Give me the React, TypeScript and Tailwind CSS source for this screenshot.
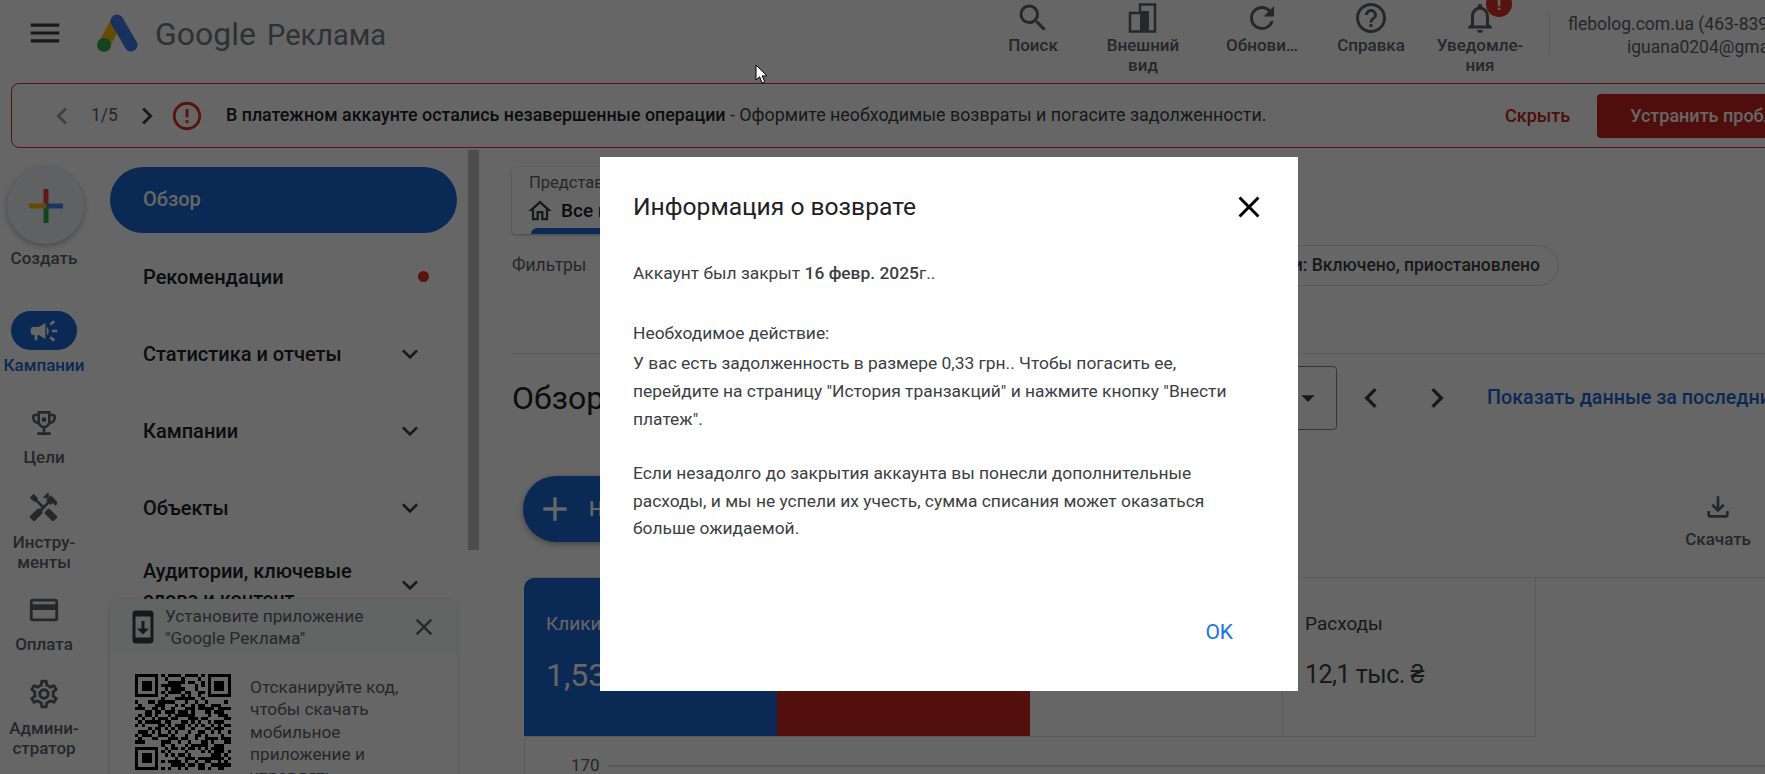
import { ReactNode } from "react";
import {
  MdSearch,
  MdRefresh,
  MdHelpOutline,
  MdNotificationsNone,
  MdCampaign,
  MdHandyman,
  MdOutlineCreditCard,
  MdOutlineSettings,
  MdExpandMore,
  MdClose,
  MdChevronLeft,
  MdChevronRight,
  MdOutlineHome,
  MdAdd,
  MdOutlineFileDownload,
  MdOutlineSystemUpdate,
  MdErrorOutline,
  MdArrowDropDown,
  MdMenu,
} from "react-icons/md";

function TopAction({ icon, label, width }: { icon: ReactNode; label: ReactNode; width: string }) {
  return (
    <div className={`flex flex-col items-center ${width}`}>
      <div className="h-[35px] flex items-center justify-center">{icon}</div>
      <div className="text-[17px] leading-[20px] font-medium text-[#5f6368] text-center">{label}</div>
    </div>
  );
}

function Logo() {
  return (
    <svg width="41" height="38" viewBox="0 0 41 38">
      <line x1="7" y1="31" x2="20" y2="7" stroke="#fbbc04" strokeWidth="12" strokeLinecap="round" />
      <line x1="20" y1="7" x2="34" y2="31" stroke="#3f7ee8" strokeWidth="13" strokeLinecap="round" />
      <circle cx="7" cy="31" r="7" fill="#34a853" />
    </svg>
  );
}

function Plus() {
  return (
    <svg width="34" height="34" viewBox="0 0 34 34">
      <rect x="14.5" y="0" width="5" height="17" fill="#ea4335" />
      <rect x="17" y="14.5" width="17" height="5" fill="#4285f4" />
      <rect x="14.5" y="17" width="5" height="17" fill="#34a853" />
      <rect x="0" y="14.5" width="17" height="5" fill="#fbbc04" />
    </svg>
  );
}

function Trophy() {
  return (
    <svg width="32" height="32" viewBox="0 0 24 24" fill="#5f6368">
      <path d="M19 5h-2V3H7v2H5c-1.1 0-2 .9-2 2v1c0 2.55 1.92 4.63 4.39 4.94.63 1.5 1.98 2.63 3.61 2.96V19H7v2h10v-2h-4v-3.1c1.63-.33 2.98-1.46 3.61-2.96C19.08 12.63 21 10.55 21 8V7c0-1.1-.9-2-2-2zM5 8V7h2v3.82C5.84 10.4 5 9.3 5 8zm7 6c-1.65 0-3-1.35-3-3V5h6v6c0 1.65-1.35 3-3 3zm7-6c0 1.3-.84 2.4-2 2.82V7h2v1z" />
      <circle cx="12" cy="9.5" r="1.8" />
    </svg>
  );
}

function AppearanceIcon() {
  return (
    <svg width="32" height="32" viewBox="0 0 32 32" fill="none">
      <path d="M13 2.5h15v27H3V11h10z" stroke="#5f6368" strokeWidth="2.5" />
      <rect x="13" y="9" width="9" height="20" fill="#5f6368" />
    </svg>
  );
}

function Qr() {
  const n = 29;
  const cells: ReactNode[] = [];
  const finder = (x: number, y: number) =>
    x >= 0 && x < 7 && y >= 0 && y < 7 && (x === 0 || x === 6 || y === 0 || y === 6 || (x >= 2 && x <= 4 && y >= 2 && y <= 4));
  for (let y = 0; y < n; y++) {
    for (let x = 0; x < n; x++) {
      let on: boolean;
      if (x < 8 && y < 8) on = finder(x, y);
      else if (x >= n - 8 && y < 8) on = finder(x - (n - 7), y);
      else if (x < 8 && y >= n - 8) on = finder(x, y - (n - 7));
      else on = ((x * 7 + y * 13 + x * y * 5 + ((x * x) ^ (y * 3))) % 5) % 3 === 0 || (x ^ y) % 7 === 1;
      if (on) cells.push(<rect key={`${x}-${y}`} x={x} y={y} width="1" height="1" fill="#000" />);
    }
  }
  return (
    <svg width="96" height="96" viewBox="0 0 29 29" shapeRendering="crispEdges" className="shrink-0">
      {cells}
    </svg>
  );
}

function RailItem({ icon, label, className }: { icon: ReactNode; label: ReactNode; className: string }) {
  return (
    <div className={`flex flex-col items-center ${className}`}>
      <div className="h-[39px] flex items-center justify-center">{icon}</div>
      <div className="mt-[5px] text-[17px] leading-[20px] font-medium text-[#5f6368] text-center whitespace-nowrap">{label}</div>
    </div>
  );
}

function NavRow({ label, dot }: { label: ReactNode; dot?: boolean }) {
  return (
    <div className="h-[77px] flex items-center justify-between pl-[33px] pr-[22px] text-[20px] leading-[28px] font-medium text-[#202124]">
      <div>{label}</div>
      {dot ? (
        <div className="w-[11px] h-[11px] rounded-full bg-[#d93025] mr-[6px]" />
      ) : (
        <MdExpandMore size={32} className="text-[#3c4043] mr-[9px]" />
      )}
    </div>
  );
}

function Tile({ label, value, className, valueClass }: { label: string; value: string; className: string; valueClass: string }) {
  return (
    <div className={`pl-[22px] pt-[34px] shrink-0 ${className}`}>
      <div className="text-[19px] leading-[24px]">{label}</div>
      <div className={`mt-[17px] leading-[44px] whitespace-nowrap ${valueClass}`}>{value}</div>
    </div>
  );
}

export default function App() {
  return (
    <div className="relative w-[1765px] h-[774px] overflow-hidden bg-white [font-family:Roboto,sans-serif] text-[#3c4043]">
      {/* top bar */}
      <header className="h-[83px] flex items-start">
        <MdMenu size={38} className="ml-[26px] mt-[14px] text-[#3c4043]" />
        <div className="ml-[33px] mt-[14px]">
          <Logo />
        </div>
        <div className="ml-[17px] mt-[12px] flex items-baseline text-[#757a80]">
          <span className="text-[32px] leading-[44px]">Google</span>
          <span className="ml-[11px] text-[29px] leading-[44px]">Реклама</span>
        </div>
        <div className="ml-auto flex items-start">
          <TopAction width="w-[110px]" icon={<MdSearch size={36} className="text-[#5f6368]" />} label="Поиск" />
          <TopAction width="w-[110px]" icon={<AppearanceIcon />} label={<>Внешний<br />вид</>} />
          <TopAction width="w-[128px]" icon={<MdRefresh size={36} className="text-[#5f6368]" />} label="Обнови…" />
          <TopAction width="w-[90px]" icon={<MdHelpOutline size={36} className="text-[#5f6368]" />} label="Справка" />
          <div className="relative w-[128px]">
            <TopAction width="w-full" icon={<MdNotificationsNone size={36} className="text-[#5f6368]" />} label={<>Уведомле-<br />ния</>} />
            <div className="absolute left-[70px] -top-[9px] w-[26px] h-[26px] rounded-full bg-[#d93025] text-white text-[17px] leading-[26px] font-bold text-center">!</div>
          </div>
        </div>
        <div className="ml-[5px] mt-[13px] w-px h-[42px] bg-[#dadce0]" />
        <div className="w-[215px] overflow-hidden whitespace-nowrap text-[17.5px] leading-[23px] text-[#5f6368] pt-[13px]">
          <div className="pl-[18px]">flebolog.com.ua (463-839-2204)</div>
          <div className="pl-[77px]">iguana0204@gmail.com</div>
        </div>
      </header>

      {/* alert */}
      <div className="ml-[11px] w-[1900px] h-[65px] flex items-center border border-[#d93025] rounded-[8px] text-[17.85px]">
        <MdChevronLeft size={34} className="ml-[33px] text-[#9aa0a6] shrink-0" />
        <span className="ml-[12px] w-[27px] text-[17.5px] text-[#5f6368] shrink-0">1/5</span>
        <MdChevronRight size={34} className="ml-[12px] text-[#3c4043] shrink-0" />
        <MdErrorOutline size={34} className="ml-[6px] text-[#d93025] shrink-0" />
        <p className="ml-[22px] w-[1279px] shrink-0 whitespace-nowrap text-[#3c4043]">
          <span className="font-medium text-[#202124]">В платежном аккаунте остались незавершенные операции</span> - Оформите необходимые возвраты и погасите задолженности.
        </p>
        <span className="font-medium text-[#c5221f] text-[18px] shrink-0">Скрыть</span>
        <div className="ml-[27px] h-[44px] w-[260px] pl-[33px] shrink-0 flex items-center rounded-[4px] bg-[#c5221f] text-white font-medium text-[18px] whitespace-nowrap">Устранить проблему</div>
      </div>

      <div className="flex h-[626px]">
        {/* icon rail */}
        <aside className="w-[88px] shrink-0 flex flex-col items-center">
          <div className="mt-[19px] ml-[3px] w-[77px] h-[77px] rounded-full bg-[#f1f3f4] shadow-[0_2px_6px_rgba(0,0,0,0.3)] flex items-center justify-center">
            <Plus />
          </div>
          <div className="mt-[4px] text-[17px] leading-[20px] font-medium text-[#5f6368]">Создать</div>
          <RailItem
            className="mt-[43px]"
            icon={
              <div className="w-[66px] h-[39px] rounded-full bg-[#1a67d2] flex items-center justify-center">
                <MdCampaign size={32} className="text-white" />
              </div>
            }
            label={<span className="text-[#1a67d2]">Кампании</span>}
          />
          <RailItem className="mt-[28px]" icon={<Trophy />} label="Цели" />
          <RailItem className="mt-[21px]" icon={<MdHandyman size={33} className="text-[#5f6368]" />} label={<>Инстру-<br />менты</>} />
          <RailItem className="mt-[18px]" icon={<MdOutlineCreditCard size={34} className="text-[#5f6368]" />} label="Оплата" />
          <RailItem className="mt-[20px]" icon={<MdOutlineSettings size={34} className="text-[#5f6368]" />} label={<>Админи-<br />стратор</>} />
        </aside>

        {/* section nav */}
        <nav className="relative ml-[22px] w-[347px] shrink-0 pt-[19px]">
          <div className="h-[66px] mb-[5px] rounded-full bg-[#1a67d2] text-white text-[20px] font-medium flex items-center pl-[33px] pb-[2px]">Обзор</div>
          <NavRow label="Рекомендации" dot />
          <NavRow label="Статистика и отчеты" />
          <NavRow label="Кампании" />
          <NavRow label="Объекты" />
          <NavRow label={<>Аудитории, ключевые<br />слова и контент</>} />

          <div className="absolute left-0 right-0 top-[451px] h-[200px] bg-white rounded-t-[10px] shadow-[0_1px_4px_rgba(0,0,0,0.2)]">
            <div className="h-[55px] bg-[#f8f9fa] rounded-t-[10px] flex items-center pl-[18px] pr-[19px] text-[17.3px] leading-[22px] text-[#5f6368]">
              <MdOutlineSystemUpdate size={36} className="-ml-[3px] text-[#3c4043] shrink-0" />
              <div className="ml-[4px] flex-1">Установите приложение<br />"Google Реклама"</div>
              <MdClose size={28} className="text-[#5f6368] shrink-0" />
            </div>
            <div className="flex pl-[25px] pt-[20px]">
              <Qr />
              <div className="ml-[19px] mt-[2px] text-[17.3px] leading-[22.3px] text-[#5f6368]">
                Отсканируйте код,<br />чтобы скачать<br />мобильное<br />приложение и<br />управлять
              </div>
            </div>
          </div>
        </nav>

        {/* scrollbar */}
        <div className="ml-[11px] mt-[2px] w-[11px] h-[400px] bg-[#c1c1c1] shrink-0" />

        {/* main */}
        <main className="ml-[33px] w-[1253px] shrink-0 pt-[19px]">
          <div className="relative w-[300px] h-[67px] rounded-[4px] bg-white shadow-[0_1px_3px_rgba(0,0,0,0.3)] overflow-hidden pl-[17px] pt-[6px]">
            <div className="text-[16.5px] leading-[20px] text-[#5f6368]">Представление</div>
            <div className="flex items-center mt-[4px] -ml-[3px] text-[19px] leading-[28px] font-medium text-[#202124]">
              <MdOutlineHome size={28} className="text-[#3c4043]" />
              <span className="ml-[7px]">Все кампании</span>
            </div>
            <div className="absolute left-[19px] right-[20px] bottom-0 h-[6px] rounded-t-[6px] bg-[#1a67d2]" />
          </div>

          <div className="mt-[11px] h-[41px] flex items-center w-[1047px] text-[17.5px]">
            <span className="text-[#5f6368]">Фильтры</span>
            <div className="ml-auto h-[41px] px-[18px] rounded-full border border-[#dadce0] flex items-center font-medium text-[#3c4043]">
              Статус кампании: Включено, приостановлено
            </div>
          </div>

          <div className="mt-[67px] border-t border-[#e0e0e0]" />

          <div className="mt-[12px] h-[64px] flex items-center">
            <h1 className="w-[188px] shrink-0 text-[32px] font-normal text-[#202124]">Обзор</h1>
            <div className="w-[637px] h-[64px] shrink-0 border border-[#80868b] rounded-[4px] flex items-center justify-end pr-[12px]">
              <MdArrowDropDown size={32} className="text-[#3c4043]" />
            </div>
            <MdChevronLeft size={40} className="ml-[14px] text-[#3c4043] shrink-0" />
            <MdChevronRight size={40} className="ml-[26px] text-[#3c4043] shrink-0" />
            <span className="ml-[30px] whitespace-nowrap text-[19.7px] font-medium text-[#1a67d2]">Показать данные за последние 7 дней</span>
          </div>

          <div className="mt-[46px] h-[66px] flex items-start justify-between pr-[14px]">
            <div className="ml-[11px] w-[260px] h-[66px] rounded-full bg-[#1a67d2] text-white shadow-[0_2px_6px_rgba(0,0,0,0.35)] flex items-center pl-[12px] text-[20px] font-medium">
              <MdAdd size={40} />
              <span className="ml-[14px]">Новая кампания</span>
            </div>
            <div className="flex flex-col items-center mt-[15px]">
              <MdOutlineFileDownload size={32} className="text-[#5f6368]" />
              <span className="mt-[6px] text-[17px] leading-[20px] font-medium text-[#5f6368]">Скачать</span>
            </div>
          </div>

          <div className="mt-[35px] ml-[12px] border-t border-[#e0e0e0]">
            <div className="flex h-[159px] w-[1012px] border-b border-[#e0e0e0]">
              <Tile className="w-[253px] bg-[#1a67d2] text-white rounded-tl-[10px]" valueClass="text-[32px]" label="Клики" value="1,53 тыс." />
              <Tile className="w-[253px] bg-[#d0281f] text-white" valueClass="text-[32px]" label="Показы" value="20,2 тыс." />
              <Tile className="w-[252px] text-[#3c4043]" valueClass="text-[32px]" label="CTR" value="7,57 %" />
              <Tile className="w-[254px] border-l border-r border-[#e0e0e0] text-[#3c4043]" valueClass="text-[25px] tracking-[-0.5px]" label="Расходы" value="12,1 тыс. ₴" />
            </div>
            <div className="h-[60px] border-l border-[#e0e0e0] pl-[46px] pt-[16px] flex items-start">
              <span className="text-[17px] leading-[24px] text-[#5f6368] w-[37px]">170</span>
              <div className="mt-[12px] flex-1 h-[2px] bg-[#e0e0e0]" />
            </div>
          </div>
        </main>
      </div>

      {/* dialog */}
      <div className="absolute inset-0 bg-black/60" />
      <div className="absolute left-[600px] top-[157px] w-[698px] h-[534px] bg-white flex flex-col pl-[33px] pr-[33px]">
        <div className="mt-[33px] h-[34px] flex items-center justify-between">
          <h2 className="text-[24.6px] leading-[34px] font-normal text-[#202124]">Информация о возврате</h2>
          <MdClose size={36} className="text-black -mr-[2px]" />
        </div>
        <div className="mt-[35px] text-[17.4px] leading-[28px] text-[#3c4043] whitespace-nowrap">
          <p>
            Аккаунт был закрыт <span className="font-medium">16 февр. 2025</span>г..
          </p>
          <p className="mt-[32px]">Необходимое действие:</p>
          <p className="mt-[2px]">
            У вас есть задолженность в размере 0,33 грн.. Чтобы погасить ее,<br />
            перейдите на страницу "История транзакций" и нажмите кнопку "Внести<br />
            платеж".
          </p>
          <p className="mt-[27px] leading-[27.5px]">
            Если незадолго до закрытия аккаунта вы понесли дополнительные<br />
            расходы, и мы не успели их учесть, сумма списания может оказаться<br />
            больше ожидаемой.
          </p>
        </div>
        <div className="mt-auto mb-[46px] flex justify-end pr-[32px]">
          <span className="text-[21px] leading-[26px] text-[#1a73e8]">OK</span>
        </div>
      </div>

      {/* mouse pointer */}
      <svg className="absolute left-[755px] top-[64px]" width="14" height="22" viewBox="0 0 14 22">
        <path d="M1 1v15l3.6-3.2 2.6 6.2 2.6-1.1-2.6-6h4.8z" fill="#fff" stroke="#000" strokeWidth="1" />
      </svg>
    </div>
  );
}
